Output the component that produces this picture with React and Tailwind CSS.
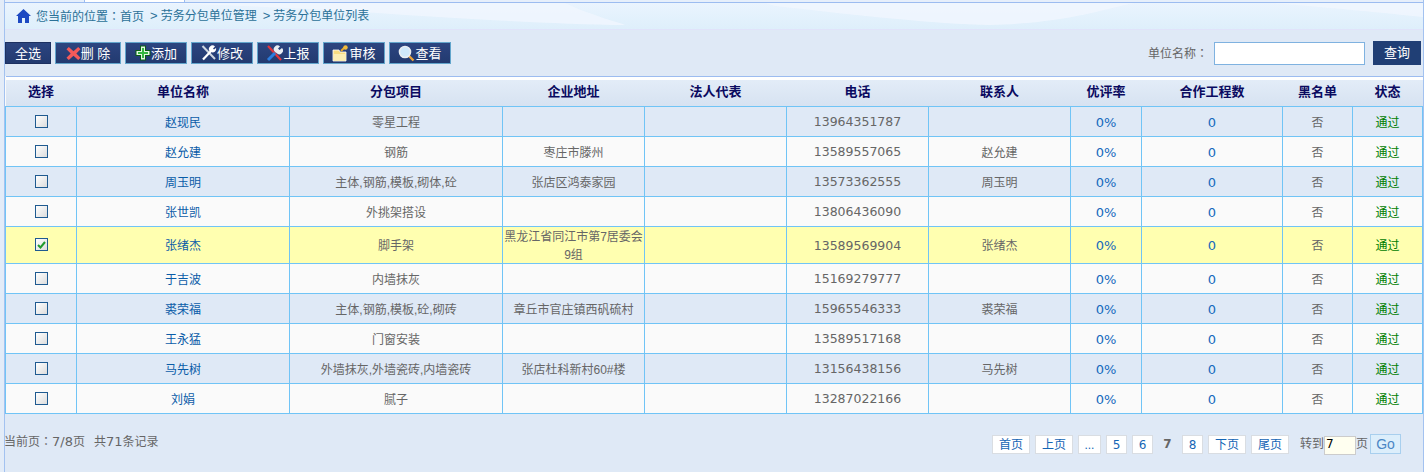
import React from 'react';

const cols = [71, 213, 213, 142, 142, 142, 142, 71, 141, 70, 70];
const heads = ['选择', '单位名称', '分包项目', '企业地址', '法人代表', '电话', '联系人', '优评率', '合作工程数', '黑名单', '状态'];

const rows = [
  ['赵现民', '零星工程', '', '13964351787', ''],
  ['赵允建', '钢筋', '枣庄市滕州', '13589557065', '赵允建'],
  ['周玉明', '主体,钢筋,模板,砌体,砼', '张店区鸿泰家园', '13573362555', '周玉明'],
  ['张世凯', '外挑架搭设', '', '13806436090', ''],
  ['张绪杰', '脚手架', '黑龙江省同江市第7居委会9组', '13589569904', '张绪杰'],
  ['于吉波', '内墙抹灰', '', '15169279777', ''],
  ['裘荣福', '主体,钢筋,模板,砼,砌砖', '章丘市官庄镇西矾硫村', '15965546333', '裘荣福'],
  ['王永猛', '门窗安装', '', '13589517168', ''],
  ['马先树', '外墙抹灰,外墙瓷砖,内墙瓷砖', '张店杜科新村60#楼', '13156438156', '马先树'],
  ['刘娟', '腻子', '', '13287022166', ''],
];

const font = "font-['Liberation_Sans','Noto_Sans_CJK_SC',sans-serif]";
const num = "font-['DejaVu_Sans','Noto_Sans_CJK_SC',sans-serif]";

const IconX = () => (
  <svg width="15" height="15" viewBox="0 0 16 16"><path d="M3 1 8 5.500 13 1l2.500 2.500L11 8l4.500 4.500L13 15 8 10.500 3 15 .5 12.500 5 8 .5 3.500z" fill="#f25a5a" /></svg>
);
const IconPlus = () => (
  <svg width="16" height="16" viewBox="0 0 16 16"><path d="M5 .5h6v4.500h4.500v6H11v4.500H5V11H.5V5H5z" fill="#0b5c18" /><path d="M6 1.500h4V6h4.500v4H10v4.500H6V10H1.500V6H6z" fill="#e4f8e0" /><path d="M7 3h2v4h4v2H9v4H7V9H3V7h4z" fill="#35b83f" /></svg>
);
const IconTools = () => (
  <svg width="16" height="16" viewBox="0 0 16 16"><path d="M1.500 1 14 14" stroke="#cfd8e2" strokeWidth="2" /><path d="M2 14.500 10 6" stroke="#fff" strokeWidth="2.200" /><path d="M9 6.500a3.500 3.500 0 0 1 5-5L12 3.500l1 1 2-1.500a3.500 3.500 0 0 1-5 4z" fill="#fff" /></svg>
);
const IconReport = () => (
  <svg width="17" height="17" viewBox="0 0 17 17"><path d="M2 1 15 15" stroke="#e3343a" strokeWidth="2.200" /><path d="M2 15 9 8" stroke="#2a7de0" strokeWidth="3" /><path d="M9 7a3.500 3.500 0 0 1 5-5.500L12 3.500l1.500 1.500L16 3a3.500 3.500 0 0 1-5.500 5z" fill="#e8edf2" /></svg>
);
const IconFolder = () => (
  <svg width="17" height="17" viewBox="0 0 17 17"><path d="M1 5h6l1 2h6v9H1z" fill="#f7dc82" stroke="#fff" strokeWidth=".8" /><path d="M2 9h12v6H2z" fill="#fbeeb4" /><path d="M9 6l4-4" stroke="#e8a92c" strokeWidth="2" /><circle cx="13.500" cy="2.500" r="2.200" fill="#f0bb3c" /></svg>
);
const IconSearch = () => (
  <svg width="17" height="17" viewBox="0 0 17 17"><path d="m10.500 10.500 5 5" stroke="#e9a23a" strokeWidth="2.400" /><circle cx="7" cy="7" r="5.500" fill="#cfe8fa" stroke="#e8edf2" strokeWidth="1.600" /></svg>
);
const IconHome = () => (
  <svg width="15" height="14" viewBox="0 0 15 14"><path d="M7.500 0 15 7h-2v7H9V9H6v5H2V7H0z" fill="#1d49c2" /></svg>
);

// light swooshes across the breadcrumb banner
const Swoosh = () => (
  <svg className="absolute left-0 top-0" width="1418" height="26" viewBox="0 0 1418 26">
    <path d="M0 0H1418V14C1380 10 1330 5 1265 0H1130C1090 8 1060 20 985 22 930 21 850 12 770 3L760 0H560C590 14 620 21 620 22 540 21 430 14 340 8 250 3 170 0 100 0H0Z" fill="#f0f6fe" opacity=".85" />
  </svg>
);

const ToolButton = ({ w, icon, label }) => (
  <button className={`${w} ml-[4px] h-[22px] flex items-center justify-center bg-gradient-to-b from-[#2c4580] to-[#223a70] border border-[#62a5cc] text-white text-[13px] leading-none`}>
    {icon}
    <span>{label}</span>
  </button>
);

const PageBtn = ({ w, children }) => (
  <span className={`${w} mt-px h-[19px] flex items-center justify-center bg-white border border-[#d9dde2] text-[#1465b5] text-[12px] leading-none`}>{children}</span>
);

const Checkbox = ({ checked }) => (
  <span className="inline-flex align-middle -translate-y-[2px] w-[13px] h-[13px] border border-[#1f5a90] bg-gradient-to-br from-white to-[#dcdcdc] items-center justify-center">
    {checked && (
      <svg width="9" height="8" viewBox="0 0 9 8"><path d="M1 4 3.500 6.500 8 1" fill="none" stroke="#1f9a2c" strokeWidth="2" /></svg>
    )}
  </span>
);

const Colon = () => <span className="font-['Noto_Sans_CJK_TC']">：</span>;

const App = () => {
  const cell = 'border border-[#70c4f6] text-center p-0';
  const td = `${cell} pt-[2px]`;
  return (
    <div className="w-[1424px] h-[472px] overflow-hidden bg-[#e3ecf8]">
      <div className={`${font} w-[1420px] h-[472px] ml-[4px] overflow-hidden bg-[#dfe9f6] text-[12px] text-[#666666] border-x border-[#a3c2f0]`}>
        {/* tab strip */}
        <div className="h-[3px] flex bg-[#e6effb] border-b border-[#9cbcf0]">
          <div className="w-[79px]" />
          <div className="w-[101px] bg-white border-x border-[#9cbcf0]" />
        </div>
        <div className="relative h-[27px] border-b border-[#e0e3fa] bg-gradient-to-b from-[#eaf4fe] to-[#deeffb]">
          <Swoosh />
          <div className="relative flex items-center h-full pl-[11px] text-[#2b7198] text-[12px]">
            <IconHome />
            <span className="ml-[5px]">您当前的位置<Colon />首页</span>
            <span className="ml-[6px] text-[13px]">&gt;</span>
            <span className="ml-[3px]">劳务分包单位管理</span>
            <span className="ml-[6px] text-[13px]">&gt;</span>
            <span className="ml-[3px]">劳务分包单位列表</span>
          </div>
        </div>
        <div className="h-[46px] pr-[2px] flex items-start justify-between">
          <div className="flex mt-[12px]">
            <button className="w-[46px] h-[22px] bg-gradient-to-b from-[#2c4580] to-[#223a70] border border-[#1c3060] text-white text-[13px] leading-none">全选</button>
            <ToolButton w="w-[66px]" icon={<IconX />} label="删 除" />
            <ToolButton w="w-[62px]" icon={<IconPlus />} label="添加" />
            <ToolButton w="w-[62px]" icon={<IconTools />} label="修改" />
            <ToolButton w="w-[62px]" icon={<IconReport />} label="上报" />
            <ToolButton w="w-[62px]" icon={<IconFolder />} label="审核" />
            <ToolButton w="w-[62px]" icon={<IconSearch />} label="查看" />
          </div>
          <div className="flex items-center mt-[11px]">
            <span className="text-[12px]">单位名称<Colon /></span>
            <input className="w-[151px] h-[23px] ml-[6px] bg-white border border-[#7fb2e0]" />
            <button className="w-[48px] h-[24px] ml-[8px] bg-[#203f75] text-white text-[13px]">查询</button>
          </div>
        </div>
        <table className="table-fixed border-collapse w-[1417px] bg-[#fafafa]">
          <colgroup>
            {cols.map((w, i) => <col key={i} style={{ width: w }} />)}
          </colgroup>
          <thead>
            <tr className="h-[30px] bg-gradient-to-b from-[#e4edf8] to-[#d6e2f1] border-t border-t-[#9cbcf0] shadow-[inset_0_3px_0_#ffffff]">
              {heads.map((h) => (
                <th key={h} className="border-b border-[#70c4f6] text-center text-[13px] font-bold text-[#0a0a60] p-0">{h}</th>
              ))}
            </tr>
          </thead>
          <tbody>
            {rows.map((r, i) => {
              const sel = i === 4;
              const bg = sel ? 'bg-[#ffffb0]' : i % 2 === 0 ? 'bg-[#dfe9f6]' : 'bg-[#fafafa]';
              return (
                <tr key={r[0]} className={`${sel ? 'h-[37px]' : 'h-[30px]'} ${bg}`}>
                  <td className={td}><Checkbox checked={sel} /></td>
                  <td className={`${td} text-[#0a5ca8]`}>{r[0]}</td>
                  <td className={td}>{r[1]}</td>
                  <td className={`${cell} leading-[18px]`}><div className="translate-y-px">{r[2]}</div></td>
                  <td className={td} />
                  <td className={`${td} ${num} text-[12.500px]`}>{r[3]}</td>
                  <td className={td}>{r[4]}</td>
                  <td className={`${td} ${num} text-[13px] text-[#1469bd]`}>0%</td>
                  <td className={`${td} ${num} text-[13px] text-[#1469bd]`}>0</td>
                  <td className={td}>否</td>
                  <td className={`${td} text-[#008000]`}>通过</td>
                </tr>
              );
            })}
          </tbody>
        </table>
        <div className="flex justify-between -ml-[1px] pr-[22px]">
          <div className="mt-[18px] h-[17px] leading-[17px] text-[12px]">
            当前页<Colon /><span className={`${num} text-[13px]`}>7/8</span>页<span className="ml-[9px]">共</span><span className={`${num} text-[13px]`}>71</span>条记录
          </div>
          <div className="flex items-start mt-[20px] h-[20px] text-[12px]">
            <PageBtn w="w-[38px]">首页</PageBtn>
            <PageBtn w="w-[38px] ml-[5px]">上页</PageBtn>
            <PageBtn w="w-[23px] ml-[5px]">...</PageBtn>
            <PageBtn w="w-[21px] ml-[5px]"><span className={num}>5</span></PageBtn>
            <PageBtn w="w-[21px] ml-[5px]"><span className={num}>6</span></PageBtn>
            <span className={`${num} w-[29px] mt-px leading-[19px] text-center font-bold`}>7</span>
            <PageBtn w="w-[21px]"><span className={num}>8</span></PageBtn>
            <PageBtn w="w-[38px] ml-[5px]">下页</PageBtn>
            <PageBtn w="w-[38px] ml-[5px]">尾页</PageBtn>
            <span className="ml-[11px] mt-px leading-[19px]">转到</span>
            <span className={`${num} w-[32px] h-[19px] mt-[2px] bg-[#fffff0] border border-[#cccccc] text-black leading-[14px] pl-[1px]`}>7</span>
            <span className="mt-px leading-[19px]">页</span>
            <span className="w-[31px] h-[20px] ml-[2px] flex items-center justify-center bg-[#dceefb] border border-[#a8cfee] text-[#4a86c5] text-[14px]">Go</span>
          </div>
        </div>
      </div>
    </div>
  );
};

export default App;
